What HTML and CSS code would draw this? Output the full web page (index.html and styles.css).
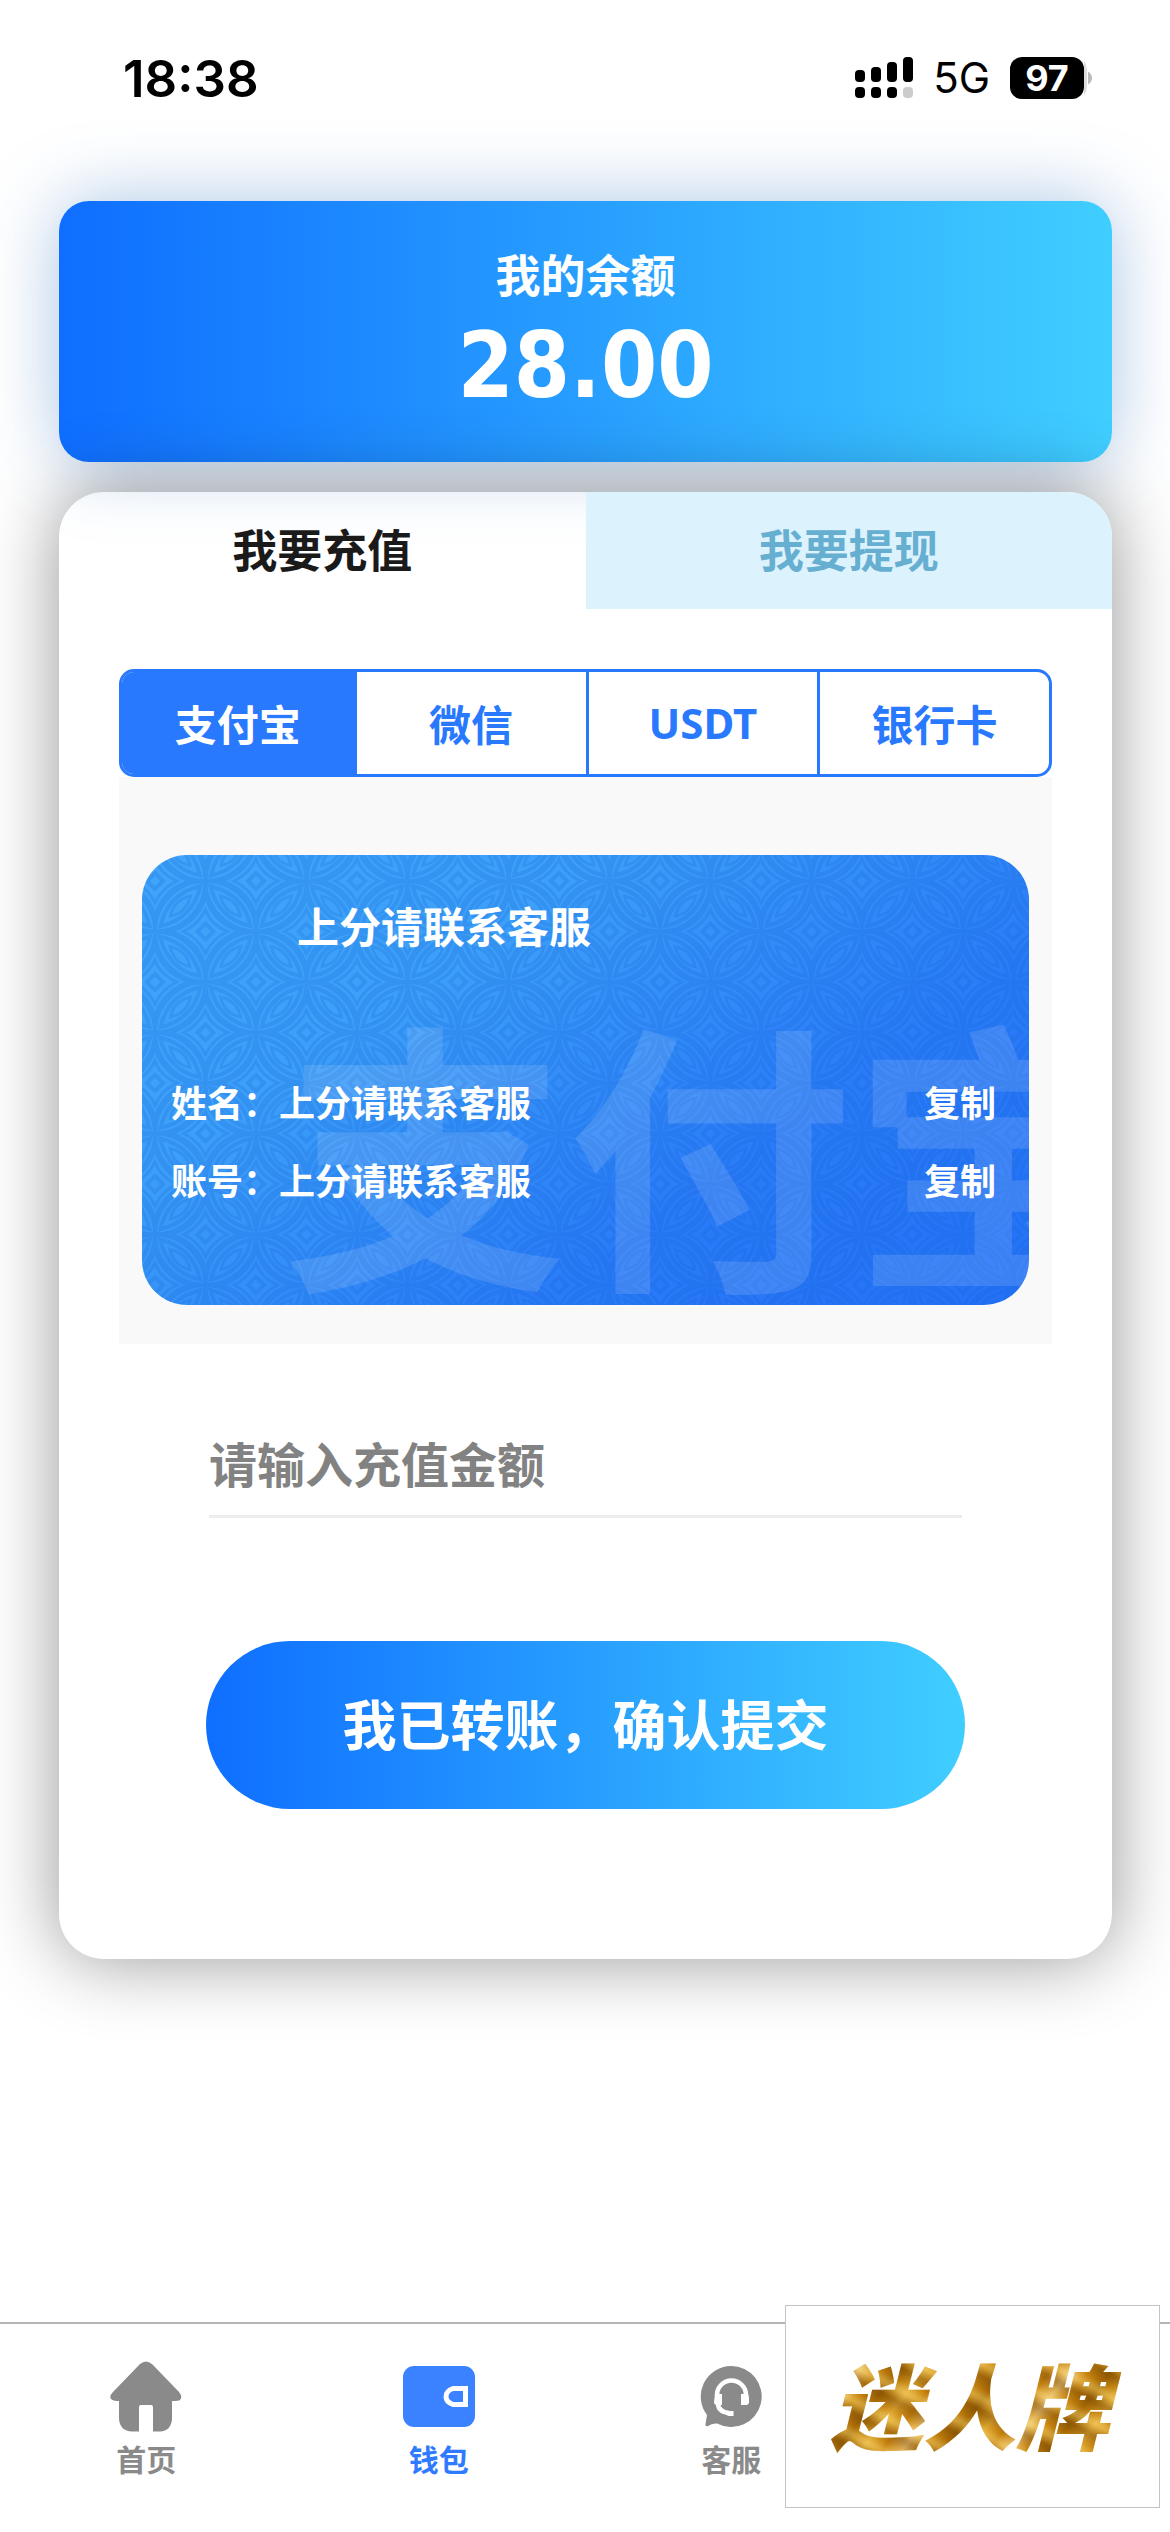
FILE: index.html
```html
<!DOCTYPE html>
<html lang="zh-CN">
<head>
<meta charset="utf-8">
<meta name="viewport" content="width=device-width, initial-scale=1">
<title>钱包</title>
<link rel="stylesheet" href="styles.css">
</head>
<body>
<div class="page">
  <header class="status">
    <span class="status-time">18:38</span>
    <div class="status-right">
      <svg class="signal" viewBox="0 0 58 42" width="58" height="42" aria-hidden="true">
        <rect x="0" y="13" width="10" height="12" rx="4"/><rect x="16" y="10" width="10" height="15" rx="4"/><rect x="32" y="5" width="10" height="20" rx="4"/><rect x="48" y="0" width="10" height="25" rx="4"/>
        <rect x="0" y="30" width="10" height="11" rx="4"/><rect x="16" y="30" width="10" height="11" rx="4"/><rect x="32" y="30" width="10" height="11" rx="4"/><rect x="48" y="30" width="10" height="11" rx="4" fill="#ccc"/>
      </svg>
      <span class="network">5G</span>
      <span class="battery"><span class="battery-level">97</span><svg viewBox="0 0 8 42" width="8" height="42" aria-hidden="true"><path d="M0 3Q3 8 3 14V28Q3 34 0 39Z" fill="#ddd"/><path d="M4 14.500Q8 17 8 21T4 27.500Z" fill="#bbb"/></svg></span>
    </div>
  </header>

  <main class="content">
    <section class="balance">
      <h1 class="balance-title">我的余额</h1>
      <p class="balance-value">28.00</p>
    </section>

    <section class="panel">
      <div class="tabs" role="tablist">
        <button class="tab" type="button" role="tab" aria-selected="true">我要充值</button>
        <button class="tab tab-off" type="button" role="tab" aria-selected="false">我要提现</button>
      </div>

      <div class="panel-body">
        <div class="methods">
          <button class="method method-on" type="button">支付宝</button>
          <button class="method" type="button">微信</button>
          <button class="method" type="button">USDT</button>
          <button class="method" type="button">银行卡</button>
        </div>

        <div class="account-wrap">
          <div class="account">
            <svg class="account-pattern" width="100%" height="100%" aria-hidden="true">
              <defs>
                <g id="star" fill="none" stroke-width="4">
                  <path d="M0 -36Q8 -8 36 0Q8 8 0 36Q-8 8 -36 0Q-8 -8 0 -36Z"/>
                  <path d="M0 -22Q5 -7 22 0Q7 7 0 22Q-7 7 -22 0Q-7 -7 0 -22Z" stroke-width="3"/>
                  <path d="M0 -8L8 0L0 8L-8 0Z"/>
                </g>
                <g id="petal" fill="none" stroke-width="4">
                  <path d="M0 0A50.500 50.500 0 0 1 50.500 50.500A50.500 50.500 0 0 1 0 0Z"/>
                  <path d="M5 5Q38 13 45 45Q13 38 5 5Z"/>
                  <path d="M15 15Q32 19 35 35Q19 32 15 15Z" stroke-width="3"/>
                </g>
                <pattern id="lattice" x="13" y="26" width="101" height="101" patternUnits="userSpaceOnUse">
                  <g stroke="#0f5fd0" opacity=".2">
                    <use href="#petal" transform="translate(50.500 0)"/>
                    <use href="#petal" transform="translate(0 50.500)"/>
                    <use href="#petal" transform="translate(50.500 0) scale(-1 1)"/>
                    <use href="#petal" transform="translate(101 50.500) scale(-1 1)"/>
                    <use href="#star"/><use href="#star" x="101"/><use href="#star" y="101"/><use href="#star" x="101" y="101"/>
                    <use href="#star" x="50.500" y="50.500"/>
                  </g>
                </pattern>
              </defs>
              <rect width="100%" height="100%" fill="url(#lattice)"/>
            </svg>
            <span class="account-mark" aria-hidden="true">支付宝</span>
            <h2 class="account-title">上分请联系客服</h2>
            <div class="account-rows">
              <div class="account-row"><span>姓名：上分请联系客服</span><button class="copy" type="button">复制</button></div>
              <div class="account-row"><span>账号：上分请联系客服</span><button class="copy" type="button">复制</button></div>
            </div>
          </div>
        </div>

        <form class="form">
          <input class="amount" type="text" inputmode="decimal" aria-label="充值金额" placeholder="请输入充值金额">
          <button class="submit" type="button">我已转账，确认提交</button>
        </form>
      </div>
    </section>
  </main>

  <nav class="nav">
    <a class="nav-item" href="#home">
      <svg class="nav-icon" viewBox="0 0 72 72" aria-hidden="true"><path d="M30 3Q36 -2 42 3L69 31Q73 36 70 39Q69 40 62 40V58Q61 70 50 70.500H43V46Q43 44 41 44H31Q29 44 29 46V70.500H22Q10 70 9 58V40Q3 40 1 38Q-1 35 3 31Z"/></svg>
      <span>首页</span>
    </a>
    <a class="nav-item nav-on" href="#wallet" aria-current="page">
      <svg class="nav-icon" viewBox="0 0 72 72" aria-hidden="true"><rect y="5" width="72" height="61" rx="11"/><path d="M62.500 27.500H50Q43 30 43 35.500Q43 41 50 43.500H62.500Z" fill="none" stroke="#fff" stroke-width="5"/></svg>
      <span>钱包</span>
    </a>
    <a class="nav-item" href="#service">
      <svg class="nav-icon" viewBox="0 0 72 72" aria-hidden="true"><path d="M36 5A30.500 30.500 0 1 1 22 62.500Q17 62 13 65Q10 66 10.500 63L12 54A30.500 30.500 0 0 1 36 5Z"/><path d="M22 35V34A14.500 14.500 0 0 1 51 34V35M23 42Q23 51 34 52" fill="none" stroke="#fff" stroke-width="4.500"/><path d="M20 33H27V44H22Q19 44 19 41ZM46 33H53L54 36V41Q54 44 51 44H46ZM31 50H38.500V55H33Q31 54 31 50Z" fill="#fff"/></svg>
      <span>客服</span>
    </a>
  </nav>
</div>

<aside class="brand"><span class="brand-name">迷人牌</span></aside>
</body>
</html>
```
FILE: styles.css
```css
* { box-sizing: border-box; }

body {
  margin: 0;
  background: #fff;
  color: #1a1a1a;
  font-family: "Noto Sans", "Noto Sans CJK SC", sans-serif;
  font-weight: 700;
}

h1, h2, p { margin: 0; font-weight: inherit; }

button, input {
  margin: 0;
  padding: 0;
  border: 0;
  background: none;
  color: inherit;
  font: inherit;
}

.page {
  display: flex;
  flex-direction: column;
  min-height: 100vh;
}

/* Status bar */
.status {
  display: flex;
  align-items: center;
  justify-content: space-between;
  height: 156px;
  padding: 0 78px 0 123px;
  color: #000;
  font-family: Inter, sans-serif;
}
.status-time { font-size: 51px; font-weight: 600; }
.status-right { display: flex; align-items: center; gap: 20px; }
.signal { display: block; }
.network { font-size: 42px; font-weight: 400; line-height: 42px; }
.battery { display: flex; align-items: center; }
.battery svg { display: block; }
.battery-level {
  width: 74px;
  height: 42px;
  border-radius: 12px;
  background: #000;
  color: #fff;
  font-size: 36px;
  line-height: 42px;
  text-align: center;
}

.content { padding: 45px 58px 60px 59px; }

/* Balance */
.balance {
  display: flex;
  flex-direction: column;
  align-items: center;
  padding: 45px 0 36px;
  border-radius: 30px;
  background: linear-gradient(90deg, #0f6eff, #40ceff);
  box-shadow: 0 0 75px rgba(40, 110, 190, .4);
  color: #fff;
}
.balance-title { font-size: 45px; line-height: 60px; }
.balance-value {
  font-family: "DejaVu Sans Condensed", "Noto Sans", sans-serif;
  font-size: 90px;
  line-height: 120px;
}

/* Recharge and withdraw panel */
.panel {
  margin-top: 30px;
  overflow: hidden;
  border-radius: 45px;
  box-shadow: 0 0 75px rgba(0, 0, 0, .42);
}
.tabs { display: grid; grid-template-columns: 1fr 1fr; }
.tab { height: 117px; padding-bottom: 4px; font-size: 45px; }
.tab-off { background: #dcf3fe; color: #66afd1; }

.panel-body { padding: 60px 60px 150px; }

.methods {
  display: grid;
  grid-template-columns: repeat(4, 1fr);
  overflow: hidden;
  border: 3px solid #2979ff;
  border-radius: 15px;
}
.method { height: 102px; padding-bottom: 2px; color: #2979ff; font-size: 42px; }
.method + .method { border-left: 3px solid #2979ff; }
.method-on { background: #2979ff; color: #fff; }

.account-wrap { padding: 78px 23px 39px; background: #f9f9f9; }
.account {
  position: relative;
  height: 450px;
  overflow: hidden;
  padding: 42px 33px 0 29px;
  border-radius: 45px;
  background: linear-gradient(145deg, #40a5fa 0%, #3c9ff9 30%, #2a7bf8 68%, #2472f7 100%);
  color: #fff;
}
.account-pattern { position: absolute; inset: 0; }
.account-mark {
  position: absolute;
  top: 162px;
  left: 142px;
  color: rgba(255, 255, 255, .12);
  font-size: 284px;
  font-weight: 700;
  line-height: 284px;
  white-space: nowrap;
}
.account-title { position: relative; padding-left: 126px; font-size: 42px; line-height: 60px; }
.account-rows { position: relative; display: grid; gap: 18px; margin-top: 117px; }
.account-row {
  display: flex;
  justify-content: space-between;
  font-size: 36px;
  line-height: 60px;
}

.form { display: flex; flex-direction: column; padding: 75px 87px 0; }
.amount {
  height: 99px;
  margin: 0 3px;
  padding-bottom: 6px;
  border-bottom: 3px solid #ededed;
  font-size: 48px;
}
.amount::placeholder { color: #828282; opacity: 1; }
.submit {
  height: 168px;
  margin-top: 123px;
  padding-bottom: 6px;
  border-radius: 84px;
  background: linear-gradient(90deg, #0f6eff, #40ceff);
  color: #fff;
  font-size: 54px;
}

/* Bottom navigation */
.nav {
  display: grid;
  grid-template-columns: repeat(4, 1fr);
  height: 210px;
  margin-top: auto;
  padding-top: 37px;
  border-top: 2px solid #b5b5b5;
}
.nav-item {
  display: flex;
  flex-direction: column;
  align-items: center;
  gap: 9px;
  color: #8a8a8a;
  font-size: 30px;
  line-height: 36px;
  text-decoration: none;
}
.nav-on { color: #2f7bff; }
.nav-icon { width: 72px; height: 72px; fill: #8a8a8a; }
.nav-on .nav-icon { fill: #3a82ff; }

/* Brand box floating over the navigation */
.brand {
  position: fixed;
  right: 10px;
  bottom: 24px;
  display: flex;
  align-items: center;
  justify-content: center;
  width: 375px;
  height: 203px;
  border: 1px solid #c4c4c4;
  background: #fff;
}
.brand-name {
  padding: 0 18px 0 12px;
  background:
    repeating-linear-gradient(28deg, rgba(120, 65, 0, .45) 0 3px, rgba(240, 200, 100, .45) 12px 15px, rgba(190, 110, 0, .3) 22px, rgba(120, 65, 0, .45) 31px),
    repeating-linear-gradient(128deg, #b8800f, #e9b840 14px, #c98812 30px, #f5d88a 46px, #cf8f16 60px, #a06a08 78px, #b8800f 84px);
  -webkit-background-clip: text;
  background-clip: text;
  color: transparent;
  font-size: 93px;
  font-style: italic;
  font-weight: 900;
  line-height: 120px;
}
```
